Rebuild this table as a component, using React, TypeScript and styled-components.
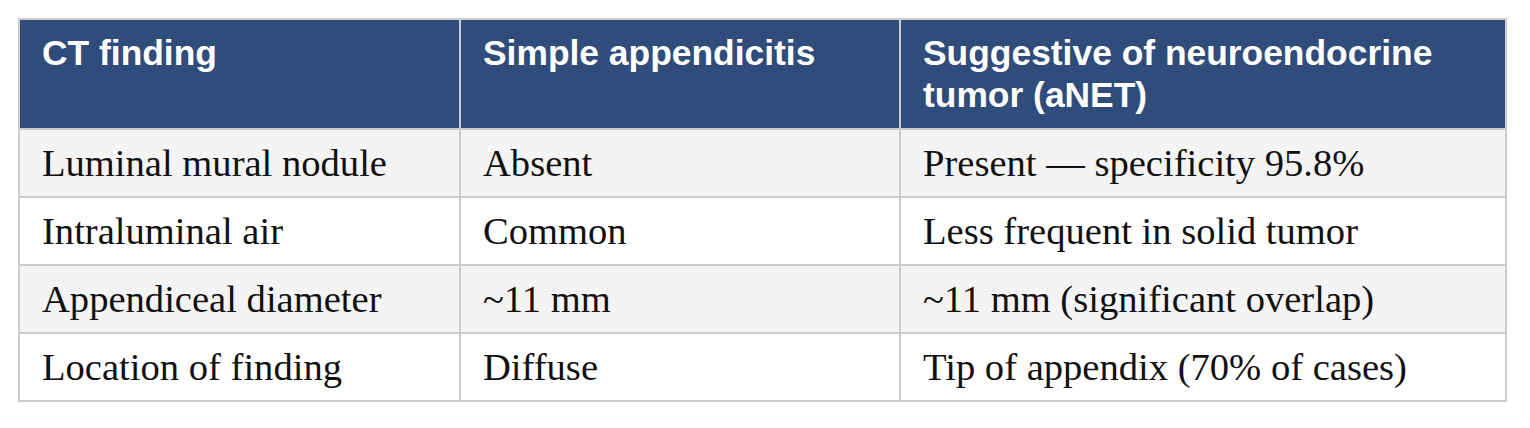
import React from "react";
import styled, { createGlobalStyle } from "styled-components";

const GlobalStyle = createGlobalStyle`
  html, body {
    margin: 0;
    padding: 0;
    background: #ffffff;
  }
  body {
    padding: 18px 0 0 18px;
  }
`;

const Table = styled.table`
  width: 1487px;
  table-layout: fixed;
  border-collapse: collapse;
  border: 2px solid #cccccc;
`;

const HeadCell = styled.th`
  background: #304c7b;
  color: #ffffff;
  font-family: "Liberation Sans", Arial, sans-serif;
  font-weight: 700;
  font-size: 35.4px;
  line-height: 42px;
  text-align: left;
  vertical-align: top;
  padding: 12px 22px;
  border: 2px solid #cccccc;
`;

const Row = styled.tr<{ $shaded: boolean }>`
  background: ${(p) => (p.$shaded ? "#f4f4f4" : "#ffffff")};
`;

const Cell = styled.td`
  color: #111111;
  font-family: "Liberation Serif", "Times New Roman", serif;
  font-size: 38.6px;
  line-height: 44px;
  padding: 11px 22px;
  vertical-align: top;
  border: 2px solid #cccccc;
  white-space: nowrap;
`;

const rows: [string, string, string][] = [
  ["Luminal mural nodule", "Absent", "Present — specificity 95.8%"],
  ["Intraluminal air", "Common", "Less frequent in solid tumor"],
  ["Appendiceal diameter", "~11 mm", "~11 mm (significant overlap)"],
  ["Location of finding", "Diffuse", "Tip of appendix (70% of cases)"],
];

export default function App() {
  return (
    <>
      <GlobalStyle />
      <Table>
        <colgroup>
          <col style={{ width: 441 }} />
          <col style={{ width: 440 }} />
          <col style={{ width: 606 }} />
        </colgroup>
        <thead>
          <tr>
            <HeadCell>CT finding</HeadCell>
            <HeadCell>Simple appendicitis</HeadCell>
            <HeadCell>
              Suggestive of neuroendocrine
              <br />
              tumor (aNET)
            </HeadCell>
          </tr>
        </thead>
        <tbody>
          {rows.map((r, i) => (
            <Row key={i} $shaded={i % 2 === 0}>
              <Cell>{r[0]}</Cell>
              <Cell>{r[1]}</Cell>
              <Cell>{r[2]}</Cell>
            </Row>
          ))}
        </tbody>
      </Table>
    </>
  );
}
